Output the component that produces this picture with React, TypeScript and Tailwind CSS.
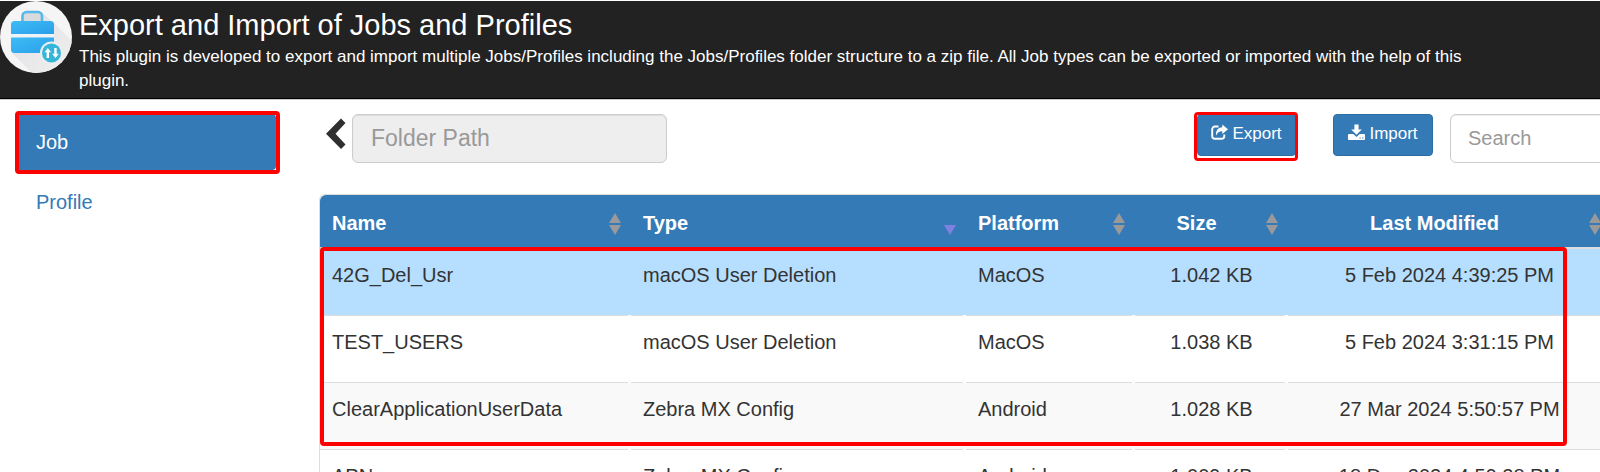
type Align = "left" | "center";
type Column = { label: string; width: string; align: Align; sort: "both" | "down" };

const columns: Column[] = [
  { label: "Name", width: "w-[311px]", align: "left", sort: "both" },
  { label: "Type", width: "w-[335px]", align: "left", sort: "down" },
  { label: "Platform", width: "w-[169px]", align: "left", sort: "both" },
  { label: "Size", width: "w-[153px]", align: "center", sort: "both" },
  { label: "Last Modified", width: "", align: "center", sort: "both" },
];

const rows = [
  ["42G_Del_Usr", "macOS User Deletion", "MacOS", "1.042 KB", "5 Feb 2024 4:39:25 PM"],
  ["TEST_USERS", "macOS User Deletion", "MacOS", "1.038 KB", "5 Feb 2024 3:31:15 PM"],
  ["ClearApplicationUserData", "Zebra MX Config", "Android", "1.028 KB", "27 Mar 2024 5:50:57 PM"],
  ["APN", "Zebra MX Config", "Android", "1.009 KB", "18 Dec 2024 4:59:28 PM"],
];

const rowColors = ["bg-[#b6deff]", "bg-white", "bg-[#f9f9f9]", "bg-white"];

function Logo() {
  return (
    <svg viewBox="0 0 72 72" className="size-[72px] shrink-0" aria-hidden="true">
      <defs>
        <linearGradient id="case" x1="0" y1="0" x2="1" y2="1">
          <stop offset="0" stopColor="#3cbcf5" />
          <stop offset="1" stopColor="#2a9eea" />
        </linearGradient>
        <linearGradient id="shade" x1="0" y1="0" x2="1" y2="1">
          <stop offset="0" stopColor="#dfdfe1" />
          <stop offset="1" stopColor="#f0f0f1" />
        </linearGradient>
        <clipPath id="disc">
          <circle cx="36" cy="36" r="36" />
        </clipPath>
      </defs>
      <circle cx="36" cy="36" r="36" fill="#f5f5f6" />
      <path clipPath="url(#disc)" d="M42 12L54 22L72 40V72H32L12 52Z" fill="url(#shade)" />
      <path d="M22.500 21V15a4 4 0 0 1 4-4H38a4 4 0 0 1 4 4v6" fill="#d9dadc" stroke="#55b9ec" strokeWidth="2.600" />
      <path d="M11 33V23.500A3.500 3.500 0 0 1 14.500 20h36a3.500 3.500 0 0 1 3.500 3.500V33Z" fill="url(#case)" />
      <path d="M11 33h43v3.500H11Z" fill="#eef3f6" />
      <path d="M11 36.500h43V52H14.500a3.500 3.500 0 0 1-3.500-3.500Z" fill="url(#case)" />
      <circle cx="51.500" cy="52" r="11.500" fill="#eceded" />
      <circle cx="51.500" cy="52" r="9.500" fill="#35b6d8" />
      <path d="M47.800 47l3.300 4.300h-2.100V57h-2.400v-5.700h-2.100ZM55.500 57l3.300-4.300h-2.100V47h-2.400v5.700h-2.100Z" fill="#fff" />
    </svg>
  );
}

function ExportIcon() {
  return (
    <svg viewBox="0 0 17 17" className="size-[17px]" aria-hidden="true">
      <path d="M7.500 2.500H4A2.800 2.800 0 0 0 1.200 5.300V12A2.800 2.800 0 0 0 4 14.800h6.500A2.800 2.800 0 0 0 13.300 12v-1.500" fill="none" stroke="#fff" strokeWidth="1.900" />
      <path d="M11.300 0.500L17 5.200L11.300 10V7.200C8 7.100 6.300 8.600 5.300 11.600C4.400 6.800 6.800 3.300 11.300 3.200Z" fill="#fff" />
    </svg>
  );
}

function ImportIcon() {
  return (
    <svg viewBox="0 0 17 17" className="size-[17px]" aria-hidden="true">
      <path d="M6.400 0.500h4.200V5.500h3.200L8.500 10.800L3.200 5.500h3.200Z" fill="#fff" />
      <path
        fillRule="evenodd"
        d="M0.900 10H5.300L8.500 12.900L11.700 10H16.100a0.900 0.900 0 0 1 0.900 0.900V15a0.900 0.900 0 0 1-0.900 0.900H0.900A0.900 0.900 0 0 1 0 15V10.900A0.900 0.900 0 0 1 0.900 10ZM11.500 13.400v1.100h1.200v-1.100ZM14.200 13.400v1.100h1.200v-1.100Z"
        fill="#fff"
      />
    </svg>
  );
}

function SortIcon({ kind }: { kind: "both" | "down" }) {
  return (
    <svg viewBox="0 0 12 22" className="absolute top-[18px] right-[10px] h-[22px] w-3" aria-hidden="true">
      {kind === "both" && <path d="M6 0l6 10H0Z" fill="#999" />}
      <path d="M0 12h12L6 22Z" fill={kind === "both" ? "#999" : "#8080e0"} />
    </svg>
  );
}

export default function App() {
  return (
    <div className="h-screen overflow-hidden bg-white font-['Liberation_Sans',Arial,sans-serif] text-xl text-[#333]">
      <header className="mt-px flex border-b border-black bg-[#222] pr-24 text-white">
        <Logo />
        <div className="ml-[7px] pt-1 pb-[5px]">
          <h1 className="text-[29px] leading-10">Export and Import of Jobs and Profiles</h1>
          <p className="text-[17px] leading-6">
            This plugin is developed to export and import multiple Jobs/Profiles including the Jobs/Profiles folder structure to a
            zip file. All Job types can be exported or imported with the help of this plugin.
          </p>
        </div>
      </header>

      <div className="flex border-t border-[#ccc] pt-[14px]">
        <nav className="ml-4 w-[260px] shrink-0">
          <a href="#job" className="relative flex h-14 items-center rounded bg-[#337ab7] px-5 text-white">
            Job
            <span className="pointer-events-none absolute -left-px -top-[3px] -bottom-1 -right-1 rounded-sm border-4 border-[#f00]" />
          </a>
          <a href="#profile" className="mt-1 flex h-14 items-center rounded px-5 text-[#337ab7]">
            Profile
          </a>
        </nav>

        <main className="ml-[43px] min-w-0 flex-1">
          <div className="-mr-5 flex items-start pl-[6px]">
            <button aria-label="Back" className="mt-1 mr-1.5 h-8 w-[21px] shrink-0">
              <svg viewBox="0 0 21 32" className="h-8 w-[21px]" aria-hidden="true">
                <path d="M16 0.500L20.500 5L10.500 15.700L20.500 26.500L16 31L1 15.700Z" fill="#2f2f2f" />
              </svg>
            </button>
            <input
              aria-label="Folder Path"
              placeholder="Folder Path"
              disabled
              className="h-[49px] w-[315px] rounded-md border border-[#ccc] bg-[#eee] px-[18px] text-[23px] shadow-[inset_0_1px_1px_rgba(0,0,0,0.075)] placeholder:text-[#999] placeholder:opacity-100"
            />
            <div className="relative ml-auto">
              <button className="flex h-[42px] w-[99px] items-start justify-center gap-1 rounded border border-[#2e6da4] bg-[#337ab7] pt-[7px] text-[17px] leading-6 text-white">
                <span className="mt-0.5">
                  <ExportIcon />
                </span>
                Export
              </button>
              <span className="pointer-events-none absolute -right-0.5 -left-[3px] -top-0.5 -bottom-[5px] rounded-sm border-[3px] border-[#f00]" />
            </div>
            <button className="ml-[37px] flex h-[42px] w-[100px] items-start justify-center gap-1 rounded border border-[#2e6da4] bg-[#337ab7] pt-[7px] text-[17px] leading-6 text-white">
              <span className="mt-0.5">
                <ImportIcon />
              </span>
              Import
            </button>
            <input
              aria-label="Search"
              type="search"
              placeholder="Search"
              className="ml-[17px] h-[49px] w-[170px] rounded-md border border-[#ccc] bg-white px-[17px] text-xl shadow-[inset_0_1px_1px_rgba(0,0,0,0.075)] placeholder:text-[#999] placeholder:opacity-100"
            />
          </div>

          <div className="relative mt-[31px] -mr-[11px] rounded-tl-md border-t border-l border-[#ddd]">
            <table className="w-full table-fixed border-separate border-spacing-0">
              <thead>
                <tr>
                  {columns.map((c) => (
                    <th
                      key={c.label}
                      className={`relative h-[54px] border-b-2 border-[#ddd] bg-[#337ab7] pt-1 pr-[42px] pl-3 text-white first:rounded-tl-md ${c.width} ${
                        c.align === "left" ? "text-left" : "text-center"
                      }`}
                    >
                      {c.label}
                      <SortIcon kind={c.sort} />
                    </th>
                  ))}
                </tr>
              </thead>
              <tbody>
                {rows.map((row, r) => (
                  <tr key={row[0]} className={rowColors[r]}>
                    {row.map((cell, i) => (
                      <td
                        key={i}
                        className={`relative h-[67px] border-b border-[#ddd] px-3 pt-3 align-top leading-7 whitespace-nowrap after:absolute after:right-0 after:-bottom-px after:h-px after:w-[3px] after:bg-white ${
                          columns[i].align === "left" ? "text-left" : "text-center"
                        }`}
                      >
                        {cell}
                      </td>
                    ))}
                  </tr>
                ))}
              </tbody>
            </table>
            <span className="pointer-events-none absolute top-[52px] right-[44px] left-0 h-[199px] rounded-sm border-4 border-[#f00]" />
          </div>
        </main>
      </div>
    </div>
  );
}
